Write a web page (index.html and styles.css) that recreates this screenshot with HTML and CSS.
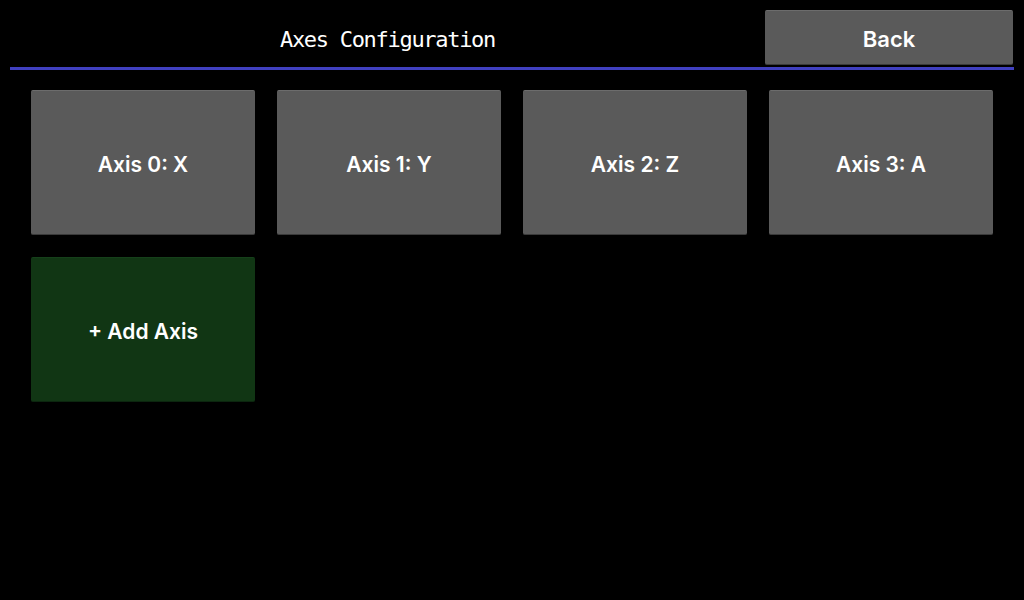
FILE: index.html
```html
<!DOCTYPE html>
<html lang="en">
<head>
    <meta charset="UTF-8">
    <title>Axes Configuration</title>
    <link rel="stylesheet" href="styles.css">
</head>
<body>
<div class="screen">
    <header class="top_bar">
        <div class="title">Axes Configuration</div>
        <button class="btn back">Back</button>
    </header>
    <div class="axes">
        <button class="btn card">Axis 0: X</button>
        <button class="btn card">Axis 1: Y</button>
        <button class="btn card">Axis 2: Z</button>
        <button class="btn card">Axis 3: A</button>
        <button class="btn card add">+ Add Axis</button>
    </div>
</div>
</body>
</html>
```

FILE: styles.css
```css
body {
    margin: 0;
    background: #000;
    color: #fff;
}

.screen {
    padding: 10px 10px 0 10px;
}

.top_bar {
    display: flex;
    align-items: center;
    height: 56px;
    padding-bottom: 1px;
    border-bottom: 3px solid #4040c0;
}

.title {
    flex: 1;
    text-align: center;
    padding-top: 2px;
    font-family: "DejaVu Sans Mono", "Liberation Mono", monospace;
    font-size: 22px;
    letter-spacing: -1.3px;
}

.btn {
    background: #5a5a5a;
    color: #fff;
    border: none;
    border-top: 1px solid #6c6c6c;
    border-bottom: 1px solid #3a3a3a;
    border-radius: 2px;
    font-family: Inter, "Noto Sans", sans-serif;
    font-weight: 600;
    font-size: 21px;
    padding: 3px 0 0 0;
}

.back {
    width: 248px;
    height: 55px;
    margin-right: 1px;
    margin-bottom: 1px;
    font-size: 22px;
}

.axes {
    display: grid;
    grid-template-columns: repeat(4, 224px);
    grid-auto-rows: 145px;
    gap: 22px;
    padding: 20px 21px;
}

.add {
    background: #113614;
    border-top-color: #15401a;
    border-bottom-color: #0c260f;
}
```
